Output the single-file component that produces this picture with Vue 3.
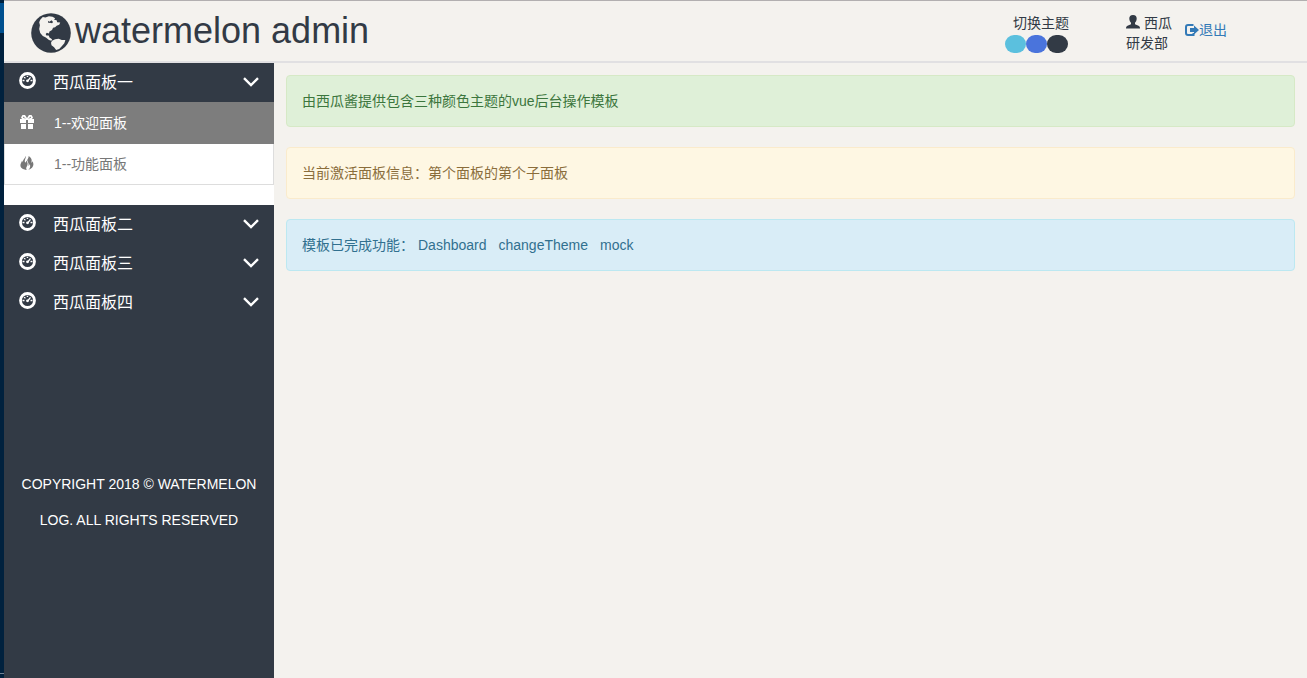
<script setup>
import { ref } from 'vue'

const panels = [
  { title: '西瓜面板一', children: [
    { label: '1--欢迎面板', icon: 'gift' },
    { label: '1--功能面板', icon: 'fire' }
  ] },
  { title: '西瓜面板二', children: [] },
  { title: '西瓜面板三', children: [] },
  { title: '西瓜面板四', children: [] }
]
const themes = ['cyan', 'blue', 'dark']
const features = ['Dashboard', 'changeTheme', 'mock']
const openPanel = ref(0)
const activeChild = ref(0)
const theme = ref('dark')
</script>

<template>
  <div class="shell">
    <div class="edge"><i class="edge-mark"></i><i class="edge-line"></i></div>
    <div class="app">
      <header class="topbar">
        <div class="brand">
          <svg class="globe" viewBox="0 0 39 39" aria-hidden="true">
            <circle cx="19.500" cy="19.500" r="19.300" fill="#323a45" />
            <path fill="#f4f2ee" d="M9 6.500 11.500 4 14 4.500 17.500 3.200 21 3.700 23.500 5 22.500 6.500 25 7 25.500 9 28.500 9.300 27.500 11.500 25 12.500 23.500 14 21.500 14.500 20.500 16.500 18 18 17.500 20 15.500 19.300 14.300 20.500 15 22 17.300 22 18 24 20.500 25.500 20 27 17.500 26.300 14.500 24 11.500 22.500 9 19.500 8 15.500 8.700 12 8 9Z" />
            <path fill="#323a45" d="M16.500 7.500 18 8.500 20 7 21.500 8.700 20.500 10 18.500 9.500 17 9.700Z" />
            <path fill="#f4f2ee" d="M20.500 27 23.500 25.500 27 25 30 26.300 33.500 26.300 32.500 29.500 30 32.500 27.500 35 24.500 36 22.500 33.500 20 31.500 19.500 29Z" />
          </svg>
          <span>watermelon admin</span>
        </div>
        <div class="themes">
          <span>切换主题</span>
          <div class="swatches">
            <button v-for="t in themes" :key="t" type="button" :class="['swatch', t]" :aria-label="t" :aria-pressed="theme === t" @click="theme = t"></button>
          </div>
        </div>
        <div class="user">
          <div class="user-name">
            <svg width="14" height="14" viewBox="0 0 14 14" aria-hidden="true"><path fill="currentColor" d="M7 0C9.600 0 10.800 1.600 10.700 3.800 10.600 5.700 9.800 7 9 7.800V9.200L12.500 10.800C13.500 11.300 14 12 14 13.500H0C0 12 .5 11.300 1.500 10.800L5 9.200V7.800C4.200 7 3.400 5.700 3.300 3.800 3.200 1.600 4.400 0 7 0Z" /></svg>
            <span>西瓜</span>
          </div>
          <div>研发部</div>
        </div>
        <a class="logout" href="#">
          <svg width="14" height="14" viewBox="0 0 14 14" aria-hidden="true"><path fill="none" stroke="currentColor" stroke-width="2" d="M8.500 2H3Q1 2 1 4V10Q1 12 3 12H8.500V10" /><path fill="currentColor" d="M9 2.500 14 7 9 11.500V9H5V5H9Z" /></svg>
          <span>退出</span>
        </a>
      </header>
      <div class="body">
        <aside class="sidebar">
          <nav>
            <section v-for="(panel, i) in panels" :key="panel.title">
              <button type="button" class="panel-head" :aria-expanded="openPanel === i" @click="openPanel = i">
                <svg class="dash" viewBox="0 0 17 17" aria-hidden="true">
                  <circle cx="8.500" cy="8.500" r="7" fill="none" stroke="currentColor" stroke-width="2.800" />
                  <path fill="none" stroke="currentColor" stroke-width="1.300" d="M3.500 8.500H5.500M5 5.300 6.500 6.300M7.700 4.300H9.200M11.500 8.500H13.500M8.300 9.500 11.500 5.300" />
                  <circle cx="8.500" cy="8.800" r="1.400" fill="currentColor" />
                </svg>
                <span>{{ panel.title }}</span>
                <svg class="chevron" viewBox="0 0 16 10" aria-hidden="true"><path fill="none" stroke="currentColor" stroke-width="2.400" d="M1 1.200 8 8 15 1.200" /></svg>
              </button>
              <ul v-if="openPanel === i && panel.children.length" class="children">
                <li v-for="(child, j) in panel.children" :key="child.label">
                  <a href="#" :class="{ active: activeChild === j }" @click.prevent="activeChild = j">
                    <svg v-if="child.icon === 'gift'" class="child-icon" viewBox="0 0 14 14" aria-hidden="true">
                      <path fill="currentColor" d="M0 4H2L1 2.500 2.500 0H5L7 3 9 0H11.500L13 2.500 12 4H14V8H8V5H6V8H0ZM1 9H6V14H1ZM8 9H13V14H8Z" />
                      <path fill="none" stroke="#7d7d7d" d="M3 2.300H4L5 3.500M11 2.300H10L9 3.500" />
                    </svg>
                    <svg v-else class="child-icon" viewBox="0 0 14 14" aria-hidden="true">
                      <path fill="currentColor" d="M5.500 0C6.500 2 4 4 5 6 5.500 7 6.300 6 6 4.500 8.300 6.500 7.800 9 6.800 10.500 5.800 12 6.200 13 6.800 14 2 13.500 0 11.500 .5 8.500 1 6.500 1.800 6 2 4.500L3 6.500C2.200 4 5 3 5.500 0ZM8.500 0C12 2 12 4.500 11.300 6.500 12 6.500 12.300 6 12.300 5 14.800 8.500 13 13 8 14 10.500 12 10.500 10 9.700 8 9.500 9 9 9.500 8.300 10 9.300 7 7.500 6 7.300 4.500 7 3 9 2.500 8.500 0Z" />
                    </svg>
                    <span>{{ child.label }}</span>
                  </a>
                </li>
              </ul>
            </section>
          </nav>
          <footer>COPYRIGHT 2018 © WATERMELON LOG. ALL RIGHTS RESERVED</footer>
        </aside>
        <main>
          <div class="alert success">由西瓜酱提供包含三种颜色主题的vue后台操作模板</div>
          <div class="alert warning">当前激活面板信息：第个面板的第个子面板</div>
          <div class="alert info">
            <span>模板已完成功能：</span>
            <div class="features"><span v-for="f in features" :key="f">{{ f }}</span></div>
          </div>
        </main>
      </div>
    </div>
  </div>
</template>

<style>
body { margin: 0; background: #f4f2ee; }
</style>

<style scoped>
* { box-sizing: border-box; }
.shell {
  display: flex;
  min-height: 100vh;
  font: 14px/20px "Liberation Sans", "Noto Sans CJK SC", sans-serif;
  color: #323a45;
}
svg { display: block; flex: none; }
button { border: 0; padding: 0; font: inherit; cursor: pointer; }
a { text-decoration: none; }
.edge {
  flex: 0 0 4px;
  display: flex;
  flex-direction: column;
  justify-content: space-between;
  padding: 3px 0 4px;
  background: #00213e;
}
.edge-mark { height: 30px; background: #00508f; }
.edge-line { height: 1px; background: #6f8294; }
.app { flex: 1; min-width: 0; display: flex; flex-direction: column; }
.topbar {
  display: flex;
  align-items: center;
  height: 63px;
  padding: 0 80px 0 27px;
  border-top: 1px solid #b2afb0;
  border-bottom: 2px solid #e1e0e2;
  background: #f4f2ee;
}
.brand {
  display: flex;
  align-items: center;
  gap: 4px;
  margin-right: auto;
  font-size: 36px;
  line-height: 40px;
  white-space: nowrap;
}
.globe { width: 40px; height: 40px; margin-top: 4px; }
.themes { width: 72px; margin: 4px 49px 0 0; text-align: center; }
.themes > span { display: block; }
.swatches { display: flex; margin-top: 2px; }
.swatch { width: 21px; height: 18px; border-radius: 9px; }
.cyan { background: #5bc0de; }
.blue { background: #4a74dc; }
.dark { background: #323a45; }
.user { margin: 4px 13px 0 0; }
.user-name { display: flex; align-items: center; gap: 4px; }
.user-name svg { margin-bottom: 2px; }
.logout { display: flex; align-items: center; margin-bottom: 2px; color: #337ab7; }
.body { flex: 1; display: flex; }
.sidebar { flex: 0 0 270px; background: #323a45; color: #fff; }
.panel-head {
  display: flex;
  align-items: center;
  width: 100%;
  height: 39px;
  padding: 0 15px;
  background: #323a45;
  color: #fff;
  font-size: 16px;
}
.dash { width: 17px; height: 17px; margin: 0 17px 4px 0; }
.chevron { width: 16px; height: 10px; margin: 0 0 2px auto; }
.children { list-style: none; margin: 0; padding: 0 0 20px; background: #fff; }
.children a {
  display: flex;
  align-items: center;
  gap: 20px;
  height: 41px;
  padding: 0 15px;
  border: 1px solid #ddd;
  border-top: 0;
  color: #777;
}
.children a.active { height: 42px; border-color: #7d7d7d; background: #7d7d7d; color: #fff; }
.child-icon { width: 14px; height: 14px; margin-bottom: 2px; }
footer { margin-top: 144px; padding: 0 8px; text-align: center; line-height: 36px; }
main { flex: 1; min-width: 0; display: flex; flex-direction: column; gap: 20px; padding: 12px; }
.alert { display: flex; padding: 15px; border: 1px solid; border-radius: 4px; }
.success { color: #3c763d; background: #dff0d8; border-color: #d6e9c6; }
.warning { color: #8a6d3b; background: #fef7e3; border-color: #faebcc; }
.info { color: #31708f; background: #d9edf7; border-color: #bce8f1; gap: 4px; }
.features { display: flex; gap: 12px; }
</style>
